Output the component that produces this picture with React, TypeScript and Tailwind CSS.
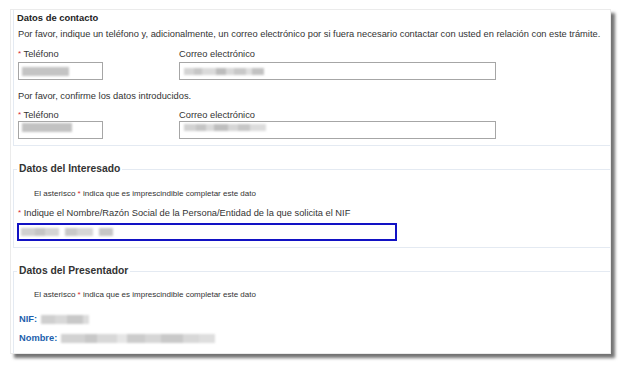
import React from 'react';

type Seg = [number, string];

// blurred-out personal data, drawn as soft grey blocks
const Blurred = ({ segs, h = 8 }: { segs: Seg[]; h?: number }) => (
  <span className="inline-flex items-center blur-[1px]">
    {segs.map(([w, c], i) => (
      <span key={i} className="inline-block" style={{ width: w, height: h, background: c }} />
    ))}
  </span>
);

const Req = () => <span className="text-[#d9262e] text-[8px] align-top">*</span>;

const App = () => {
  return (
    <div
      className="min-h-screen bg-white pt-[9px] pl-[10px] text-[#333]"
      style={{ fontFamily: '"Liberation Sans", Arial, sans-serif' }}
    >
      <div className="w-[601px] h-[345px] bg-white border border-[#ebebeb] shadow-[4px_4px_3px_rgba(0,0,0,0.55)] flex flex-col pl-[2px]">
        {/* Datos de contacto */}
        <section className="border-l border-b border-[#e4eaf2] pl-[4px] pb-[6px]">
          <div className="mt-[2px] -ml-[1px] leading-[12px] text-[9.4px] font-bold text-[#222]">Datos de contacto</div>
          <p className="mt-[4px] leading-[12px] text-[9.3px]">
            Por favor, indique un teléfono y, adicionalmente, un correo electrónico por si fuera necesario contactar con usted en relación con este trámite.
          </p>
          <div className="mt-[8px] flex leading-[12px] text-[9.3px]">
            <div className="w-[161px]">
              <Req /> Teléfono
            </div>
            <div>Correo electrónico</div>
          </div>
          <div className="mt-[2px] flex">
            <div className="w-[161px]">
              <div className="w-[85px] h-[18px] border border-[#a6a6a6] flex items-center pl-[3px]">
                <Blurred segs={[[47, '#c4c4c4']]} h={9} />
              </div>
            </div>
            <div className="w-[317px] h-[18px] border border-[#a6a6a6] flex items-center pl-[4px]">
              <Blurred segs={[[10, '#d4d4d4'], [8, '#c6c6c6'], [14, '#dadada'], [10, '#bcbcbc'], [8, '#d8d8d8'], [12, '#c8c8c8'], [6, '#dedede'], [12, '#c2c2c2']]} h={7} />
            </div>
          </div>
          <p className="mt-[10px] leading-[12px] text-[9.3px]">Por favor, confirme los datos introducidos.</p>
          <div className="mt-[7px] flex leading-[12px] text-[9.3px]">
            <div className="w-[161px]">
              <Req /> Teléfono
            </div>
            <div>Correo electrónico</div>
          </div>
          <div className="flex">
            <div className="w-[161px]">
              <div className="w-[85px] h-[18px] border border-[#a6a6a6] flex items-start pl-[3px] pt-[1px]">
                <Blurred segs={[[50, '#c2c2c2']]} h={9} />
              </div>
            </div>
            <div className="w-[317px] h-[18px] border border-[#a6a6a6] flex items-start pl-[4px] pt-[2px]">
              <Blurred segs={[[12, '#d2d2d2'], [10, '#c4c4c4'], [8, '#dadada'], [14, '#bebebe'], [10, '#d6d6d6'], [12, '#c6c6c6'], [16, '#dcdcdc']]} h={7} />
            </div>
          </div>
        </section>

        {/* Datos del Interesado */}
        <fieldset className="mt-[16px] border-l border-t border-b border-[#e4eaf2] pb-[6px]">
          <legend className="ml-[3px] px-[2px] leading-[14px] text-[10.3px] font-bold">Datos del Interesado</legend>
          <p className="mt-[13px] pl-[20px] leading-[10px] text-[8px]">
            El asterisco <span className="text-[#d9262e]">*</span> indica que es imprescindible completar este dato
          </p>
          <div className="mt-[8px] pl-[4px] leading-[12px] text-[9.3px]">
            <Req /> Indique el Nombre/Razón Social de la Persona/Entidad de la que solicita el NIF
          </div>
          <div className="mt-[4px] ml-[3px] w-[380px] h-[18px] border-2 border-[#1212c4] flex items-center pl-[2px]">
            <Blurred segs={[[14, '#d0d0d0'], [10, '#c4c4c4'], [14, '#d4d4d4'], [6, '#ffffff'], [12, '#c8c8c8'], [16, '#d6d6d6'], [6, '#ffffff'], [14, '#c6c6c6']]} h={8} />
          </div>
        </fieldset>

        {/* Datos del Presentador */}
        <fieldset className="mt-[16px] flex-1 border-l border-t border-[#e4eaf2]">
          <legend className="ml-[3px] px-[2px] leading-[14px] text-[10.3px] font-bold">Datos del Presentador</legend>
          <p className="mt-[12px] pl-[20px] leading-[10px] text-[8px]">
            El asterisco <span className="text-[#d9262e]">*</span> indica que es imprescindible completar este dato
          </p>
          <div className="mt-[13px] pl-[5px] leading-[12px] text-[9.3px] font-bold text-[#1d5fad] flex items-center gap-[4px]">
            NIF:
            <Blurred segs={[[14, '#cfcfcf'], [12, '#d8d8d8'], [16, '#c8c8c8'], [6, '#dcdcdc']]} h={9} />
          </div>
          <div className="mt-[7px] pl-[5px] leading-[12px] text-[9.3px] font-bold text-[#1d5fad] flex items-center gap-[4px]">
            Nombre:
            <Blurred segs={[[24, '#d2d2d2'], [12, '#c8c8c8'], [20, '#d8d8d8'], [10, '#e6e6e6'], [18, '#cccccc'], [16, '#d6d6d6'], [22, '#c9c9c9'], [16, '#d8d8d8'], [16, '#dedede']]} h={9} />
          </div>
        </fieldset>
      </div>
    </div>
  );
};

export default App;
